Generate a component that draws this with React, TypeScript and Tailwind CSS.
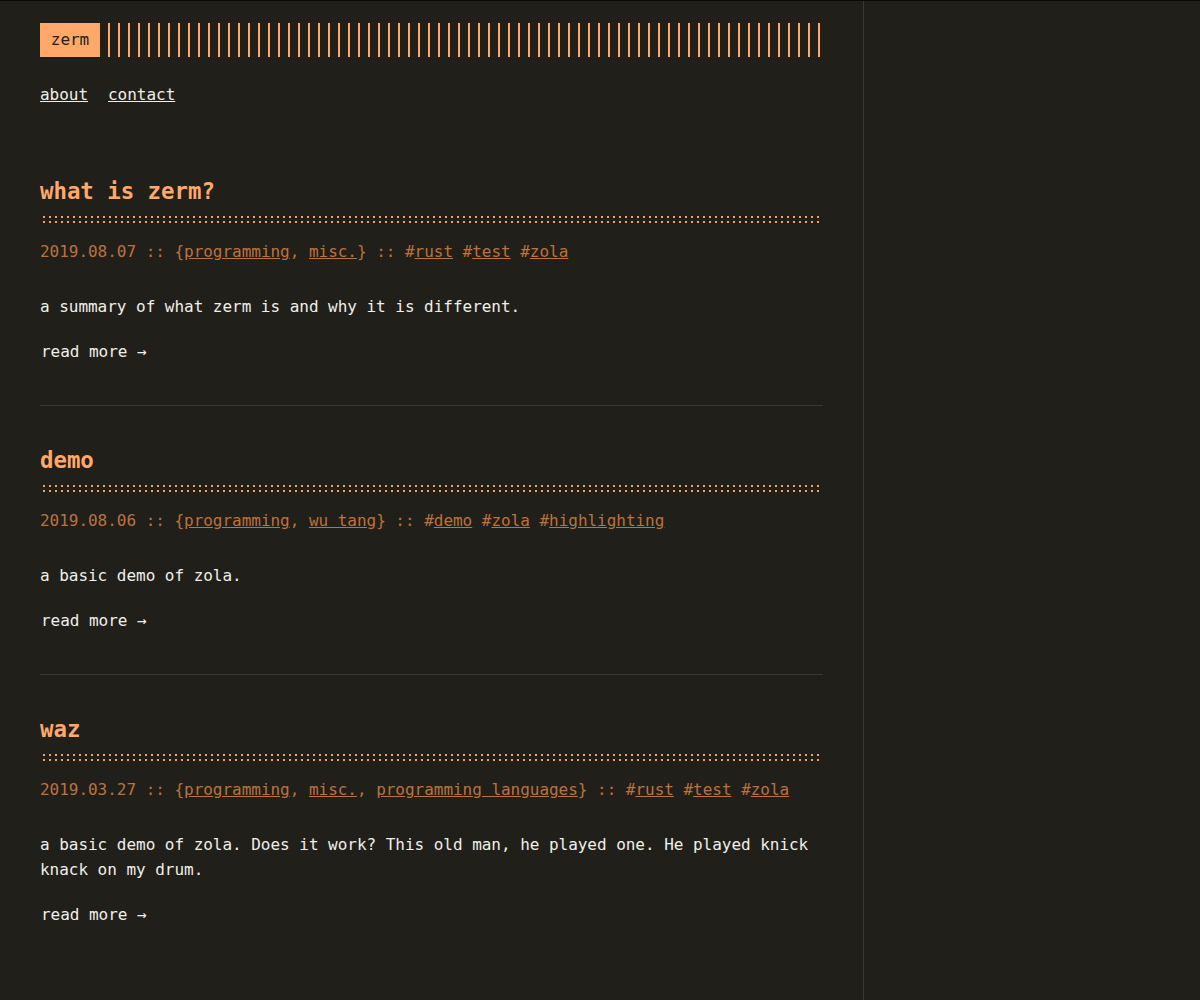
import React from "react";

type Post = {
  title: string;
  date: string;
  cats: string[];
  tags: string[];
  summary: string;
};

const posts: Post[] = [
  {
    title: "what is zerm?",
    date: "2019.08.07",
    cats: ["programming", "misc."],
    tags: ["rust", "test", "zola"],
    summary: "a summary of what zerm is and why it is different.",
  },
  {
    title: "demo",
    date: "2019.08.06",
    cats: ["programming", "wu tang"],
    tags: ["demo", "zola", "highlighting"],
    summary: "a basic demo of zola.",
  },
  {
    title: "waz",
    date: "2019.03.27",
    cats: ["programming", "misc.", "programming languages"],
    tags: ["rust", "test", "zola"],
    summary:
      "a basic demo of zola. Does it work? This old man, he played one. He played knick knack on my drum.",
  },
];

function Dots() {
  return (
    <div className="mt-[10px] flex flex-col gap-[3px] pl-[3px]">
      <div className="h-[2px] bg-[repeating-linear-gradient(90deg,#f5a066_0px,#f5a066_2px,transparent_2px,transparent_6px)]" />
      <div className="h-[2px] bg-[repeating-linear-gradient(90deg,#f5a066_0px,#f5a066_2px,transparent_2px,transparent_6px)]" />
    </div>
  );
}

function PostItem({ p }: { p: Post }) {
  return (
    <article>
      <h2 className="text-[22.4px] leading-[29px] font-bold text-[#ffa86a]">{p.title}</h2>
      <Dots />
      <div className="mt-4 text-[#bb723f] leading-[25px] whitespace-nowrap">
        {p.date} :: {"{"}
        {p.cats.map((c, i) => (
          <React.Fragment key={c}>
            <a className="underline">{c}</a>
            {i < p.cats.length - 1 ? ", " : ""}
          </React.Fragment>
        ))}
        {"}"} ::{" "}
        {p.tags.map((t, i) => (
          <React.Fragment key={t}>
            #<a className="underline">{t}</a>
            {i < p.tags.length - 1 ? " " : ""}
          </React.Fragment>
        ))}
      </div>
      <p className="mt-[30px] leading-[25px] text-[#f0efe9]">{p.summary}</p>
      <div className="mt-5 leading-[25px] text-[#f0efe9] pl-[1px]">read more →</div>
    </article>
  );
}

export default function App() {
  return (
    <div
      className="min-h-screen bg-[#211f1a] border-t border-[#0a0a08] text-base tracking-[-0.03px]"
      style={{ fontFamily: '"DejaVu Sans Mono", monospace' }}
    >
      <div className="w-[864px] min-h-[999px] border-r border-[#3a3935] px-10 pt-[22px] pb-16">
        <header className="flex h-[34px] items-stretch gap-2">
          <div className="bg-[#ffa86a] text-[#221f1a] w-[60px] justify-center flex items-center">zerm</div>
          <div className="flex-1 bg-[repeating-linear-gradient(90deg,#ffa86a_0px,#ffa86a_2px,transparent_2px,transparent_10px)]" />
        </header>
        <nav className="mt-[25px] flex gap-5 leading-[25px] text-[#f0efe9]">
          <a className="underline">about</a>
          <a className="underline">contact</a>
        </nav>
        <main className="mt-[70px]">
          {posts.map((p, i) => (
            <React.Fragment key={p.title}>
              {i > 0 && <hr className="mt-[41px] mb-10 border-0 border-t border-[#3a3833]" />}
              <PostItem p={p} />
            </React.Fragment>
          ))}
        </main>
      </div>
    </div>
  );
}
